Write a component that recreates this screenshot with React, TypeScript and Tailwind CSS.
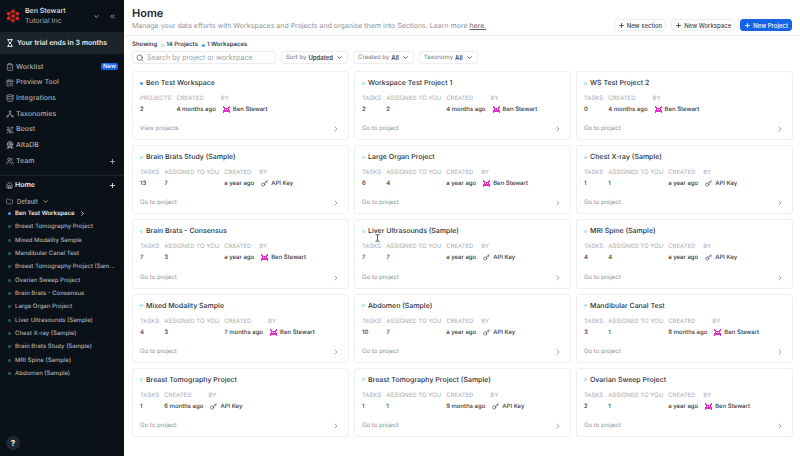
import type { ReactNode } from "react";
import {
  ChevronDown,
  ChevronRight,
  ChevronsLeft,
  ClipboardCheck,
  Database,
  Folder,
  Hourglass,
  House,
  Key,
  Network,
  Plus,
  Search,
  Users,
} from "lucide-react";

type Creator = "Ben Stewart" | "API Key";

type Item = {
  name: string;
  workspace?: boolean;
  count: string;
  assigned?: string;
  created: string;
  by: Creator;
};

const items: Item[] = [
  { name: "Ben Test Workspace", workspace: true, count: "2", created: "4 months ago", by: "Ben Stewart" },
  { name: "Workspace Test Project 1", count: "2", assigned: "2", created: "4 months ago", by: "Ben Stewart" },
  { name: "WS Test Project 2", count: "0", created: "4 months ago", by: "Ben Stewart" },
  { name: "Brain Brats Study (Sample)", count: "13", assigned: "7", created: "a year ago", by: "API Key" },
  { name: "Large Organ Project", count: "6", assigned: "4", created: "a year ago", by: "Ben Stewart" },
  { name: "Chest X-ray (Sample)", count: "1", assigned: "1", created: "a year ago", by: "API Key" },
  { name: "Brain Brats - Consensus", count: "7", assigned: "3", created: "a year ago", by: "Ben Stewart" },
  { name: "Liver Ultrasounds (Sample)", count: "7", assigned: "7", created: "a year ago", by: "API Key" },
  { name: "MRI Spine (Sample)", count: "4", assigned: "4", created: "a year ago", by: "API Key" },
  { name: "Mixed Modality Sample", count: "4", assigned: "3", created: "7 months ago", by: "Ben Stewart" },
  { name: "Abdomen (Sample)", count: "10", assigned: "7", created: "a year ago", by: "API Key" },
  { name: "Mandibular Canal Test", count: "3", assigned: "1", created: "8 months ago", by: "Ben Stewart" },
  { name: "Breast Tomography Project", count: "1", created: "6 months ago", by: "API Key" },
  { name: "Breast Tomography Project (Sample)", count: "1", assigned: "1", created: "9 months ago", by: "API Key" },
  { name: "Ovarian Sweep Project", count: "2", assigned: "1", created: "a year ago", by: "Ben Stewart" },
];

const tree = [
  "Breast Tomography Project",
  "Mixed Modality Sample",
  "Mandibular Canal Test",
  "Breast Tomography Project (Sam...",
  "Ovarian Sweep Project",
  "Brain Brats - Consensus",
  "Large Organ Project",
  "Liver Ultrasounds (Sample)",
  "Chest X-ray (Sample)",
  "Brain Brats Study (Sample)",
  "MRI Spine (Sample)",
  "Abdomen (Sample)",
];

function Logo() {
  const dots = [
    [7, 2.2], [2.6, 4.6], [11.4, 4.6], [7, 7], [2.6, 9.4], [11.4, 9.4], [7, 11.8],
  ];
  return (
    <svg viewBox="0 0 14 14" className="size-3.5 shrink-0" aria-hidden="true">
      <path d="M7 2.2 11.4 4.6v4.8L7 11.8 2.6 9.4V4.6zM7 2.2v9.6M2.6 4.6l8.8 4.8M11.4 4.6 2.6 9.4" stroke="#8f1d1a" strokeWidth="1" fill="none" />
      {dots.map(([x, y]) => (
        <circle key={`${x}-${y}`} cx={x} cy={y} r="1.8" fill="#d0281f" />
      ))}
    </svg>
  );
}

function PreviewIcon() {
  return (
    <svg viewBox="0 0 24 24" className="size-2" fill="none" stroke="currentColor" strokeWidth="2" aria-hidden="true">
      <path d="M21 11V5a2 2 0 0 0-2-2H5a2 2 0 0 0-2 2v14a2 2 0 0 0 2 2h6M3 8l18 0M8 3l-3 5M15 3l-3 5M7 13l4 4" />
      <circle cx="16" cy="16" r="3.5" />
      <path d="m19 19 3 3" />
    </svg>
  );
}

function TaxonomyIcon() {
  return (
    <svg viewBox="0 0 24 24" className="size-2" fill="none" stroke="currentColor" strokeWidth="2.5" aria-hidden="true">
      <circle cx="12" cy="5" r="2.5" />
      <circle cx="4.5" cy="19" r="2.5" />
      <circle cx="19.5" cy="19" r="2.5" />
      <path d="M12 7.5V12L6 17M12 12l6 5" />
    </svg>
  );
}

function BoostIcon() {
  return (
    <svg viewBox="0 0 24 24" className="size-2" fill="none" stroke="currentColor" strokeWidth="2" strokeLinecap="round" aria-hidden="true">
      <path d="M9 13c1-5 5-9 12-10-1 7-5 11-10 12zM9 9H5l-2 4h5M15 15v4l-4 2v-5M3 21l4-4M3 4l3 2M20 17l2 3M8 3l1 2M18 21l-1-2" />
    </svg>
  );
}

function AltaIcon() {
  return (
    <svg viewBox="0 0 24 24" className="size-2" fill="none" stroke="currentColor" strokeWidth="3" strokeLinecap="round" aria-hidden="true">
      <circle cx="12" cy="10" r="8" />
      <circle cx="12" cy="10" r="3" />
      <path d="M3 21h6l-1-4M21 21h-6l1-4" />
    </svg>
  );
}

function Avatar() {
  return (
    <svg viewBox="0 0 7 7" className="size-[7px]" fill="#e62bc8" aria-hidden="true">
      <path d="M0 0h1v1h1v1h3V1h1V0h1v2H6v2h1v3H6V6H1v1H0V4h1V2H0z" />
      <path d="M2 3h1v1H2zM4 3h1v1H4z" fill="#fff" />
    </svg>
  );
}

function KeyIcon() {
  return <Key className="size-[7px]" strokeWidth={2} />;
}

function Bullet({ workspace, dark }: { workspace?: boolean; dark?: boolean }) {
  if (workspace) return <span className="size-[3px] shrink-0 rounded-full bg-[#3b9df5]" />;
  return (
    <span className={`size-[3px] shrink-0 rounded-full border ${dark ? "border-[#2c8f9e]" : "border-[#7fd8ea]"}`} />
  );
}

function NavItem({ icon, label, children }: { icon: ReactNode; label: string; children?: ReactNode }) {
  return (
    <li className="flex items-center justify-between pr-1.5">
      <a href="#" className="flex items-center gap-0.5">
        {icon}
        {label}
      </a>
      {children}
    </li>
  );
}

function Sidebar() {
  return (
    <aside className="flex w-[124px] shrink-0 flex-col bg-[#0b1118] text-[#a9adb2]">
      <div className="flex h-8 items-center gap-[5px] pr-2 pl-1.5">
        <Logo />
        <div className="min-w-0 flex-1 leading-[10px]">
          <p className="text-[7px] font-medium text-[#e4e6e8]">Ben Stewart</p>
          <p className="text-[7px]">Tutorial Inc</p>
        </div>
        <button type="button" aria-label="Switch organisation" className="pr-1">
          <ChevronDown className="size-[7px]" strokeWidth={3} />
        </button>
        <button type="button" aria-label="Collapse sidebar">
          <ChevronsLeft className="size-[7px]" strokeWidth={3} />
        </button>
      </div>
      <div className="flex h-[22px] items-center gap-[3px] bg-[#1b242b] pl-1.5 text-[7px] font-semibold text-[#e9ebec]">
        <Hourglass className="size-2" strokeWidth={3} />
        Your trial ends in 3 months
      </div>
      <ul className="mt-[5px] grid h-[110px] auto-rows-fr pl-1.5 text-[7px] font-medium">
        <NavItem icon={<ClipboardCheck className="size-2" />} label="Worklist">
          <span className="rounded-[2px] bg-[#1763e5] px-0.5 text-[6px] leading-[7px] text-white">New</span>
        </NavItem>
        <NavItem icon={<PreviewIcon />} label="Preview Tool" />
        <NavItem icon={<Database className="size-2" />} label="Integrations" />
        <NavItem icon={<TaxonomyIcon />} label="Taxonomies" />
        <NavItem icon={<BoostIcon />} label="Boost" />
        <NavItem icon={<AltaIcon />} label="AltaDB" />
        <NavItem icon={<Users className="size-2" />} label="Team">
          <button type="button" aria-label="Invite to team" className="px-0.5">
            <Plus className="size-[7px]" strokeWidth={3} />
          </button>
        </NavItem>
      </ul>
      <div className="mt-1.5 flex h-5 items-center justify-between border-t border-[#1d232a] pr-2 pl-1.5 text-[7px] font-semibold text-[#e9ebec]">
        <a href="#" className="flex items-center gap-0.5">
          <House className="size-[7px]" />
          Home
        </a>
        <button type="button" aria-label="Add to home">
          <Plus className="size-[7px]" strokeWidth={3} />
        </button>
      </div>
      <button type="button" className="flex h-3 items-center gap-1 pl-1.5 text-[6px] font-medium">
        <Folder className="size-[7px]" />
        Default
        <ChevronDown className="size-[7px]" strokeWidth={3} />
      </button>
      <ul className="grid h-[173px] auto-rows-fr pl-2 text-[6px] font-medium">
        <li className="flex items-center gap-1 text-[#e9ebec]">
          <Bullet workspace />
          <a href="#" className="font-semibold">Ben Test Workspace</a>
          <ChevronRight className="size-[7px]" strokeWidth={3} />
        </li>
        {tree.map((name) => (
          <li key={name} className="flex items-center gap-1">
            <Bullet dark />
            <a href="#" className="whitespace-nowrap">{name}</a>
          </li>
        ))}
      </ul>
      <button
        type="button"
        aria-label="Help"
        className="mt-auto mb-1.5 ml-1.5 size-3.5 rounded-full bg-[#20292f] text-[8px] leading-none font-bold text-white"
      >
        ?
      </button>
    </aside>
  );
}

function HeaderButton({ label, primary }: { label: string; primary?: boolean }) {
  return (
    <button
      type="button"
      className={`flex h-3 items-center gap-0.5 rounded-[3px] border px-[3px] text-[6px] font-medium ${
        primary ? "border-[#1763e5] bg-[#1763e5] text-white" : "border-[#ededef] text-[#3f464e]"
      }`}
    >
      <Plus className="size-[7px]" strokeWidth={3} />
      {label}
    </button>
  );
}

function Filter({ id, label, value }: { id: string; label: string; value: string }) {
  return (
    <div className="flex h-[13px] items-center rounded-[3px] border border-[#ededef] px-1 text-[6px]">
      <label htmlFor={id} className="mr-0.5 text-[#747a82]">{label}</label>
      <select id={id} className="field-sizing-content appearance-none font-semibold text-[#3f464e]">
        <option>{value}</option>
      </select>
      <ChevronDown className="ml-[3px] size-[7px] text-[#3f464e]" strokeWidth={3} />
    </div>
  );
}

function Stat({ label, children }: { label: string; children: ReactNode }) {
  return (
    <div>
      <dt className="text-[6px] leading-[11px] text-[#a7abb1]">{label}</dt>
      <dd className="flex h-[11px] items-center text-[6px] font-medium text-[#343a42]">{children}</dd>
    </div>
  );
}

function Card({ item }: { item: Item }) {
  return (
    <article className="flex min-w-0 flex-col rounded-[3px] border border-[#efeff1] pr-2 pl-[7px]">
      <h2 className="mt-1.5 flex items-center gap-[3px] text-[7px] leading-[10px] font-medium text-[#2b3138]">
        <Bullet workspace={item.workspace} />
        {item.name}
      </h2>
      <dl className="mt-[5px] flex gap-[5px] whitespace-nowrap">
        <Stat label={item.workspace ? "PROJECTS" : "TASKS"}>{item.count}</Stat>
        {item.assigned && <Stat label="ASSIGNED TO YOU">{item.assigned}</Stat>}
        <Stat label="CREATED">{item.created}</Stat>
        <Stat label="BY">
          <span className="flex w-3 items-center pl-0.5">
            {item.by === "API Key" ? <KeyIcon /> : <Avatar />}
          </span>
          {item.by}
        </Stat>
      </dl>
      <a href="#" className="mt-auto mb-[5px] flex items-center justify-between text-[6px] leading-[10px] text-[#8f949b]">
        {item.workspace ? "View projects" : "Go to project"}
        <ChevronRight className="size-2 text-[#747a82]" />
      </a>
    </article>
  );
}

export default function App() {
  return (
    <div className="relative flex min-h-screen bg-white font-['Inter',sans-serif] [text-rendering:geometricPrecision]">
      <Sidebar />
      <main className="flex min-w-0 flex-1 flex-col">
        <header className="flex h-9 items-end justify-between border-b border-[#ededef] pr-2 pb-1 pl-2">
          <div>
            <h1 className="text-[11px] leading-[14px] font-semibold text-[#22272e]">Home</h1>
            <p className="text-[7px] leading-[11px] text-[#8d9299]">
              Manage your data efforts with Workspaces and Projects and organise them into Sections. Learn more{" "}
              <a href="#" className="text-[#5d646c] underline">here.</a>
            </p>
          </div>
          <div className="flex gap-[5px]">
            <HeaderButton label="New section" />
            <HeaderButton label="New Workspace" />
            <HeaderButton label="New Project" primary />
          </div>
        </header>
        <p className="mt-1 flex items-center pl-2 text-[6px] leading-[10px] font-semibold text-[#2f4052]">
          Showing
          <span className="ml-1 flex items-center gap-0.5"><Bullet />14 Projects</span>
          <span className="ml-1 flex items-center gap-0.5"><Bullet workspace />1 Workspaces</span>
        </p>
        <div className="mt-px flex gap-[5px] pl-2">
          <label className="flex h-[13px] w-36 items-center gap-[3px] rounded-[3px] border border-[#ededef] pl-[3px]">
            <Search className="size-2 shrink-0 text-[#3f464e]" />
            <input
              type="search"
              aria-label="Search by project or workspace"
              placeholder="Search by project or workspace"
              className="h-[11px] min-w-0 flex-1 text-[7px] leading-[11px] outline-none placeholder:text-[#9a9fa6]"
            />
          </label>
          <Filter id="sort" label="Sort by" value="Updated" />
          <Filter id="created-by" label="Created by" value="All" />
          <Filter id="taxonomy" label="Taxonomy" value="All" />
        </div>
        <section aria-label="Projects" className="mt-[7px] mb-[19px] grid flex-1 auto-rows-fr grid-cols-3 gap-[5px] pr-[7px] pl-2">
          {items.map((item) => (
            <Card key={item.name} item={item} />
          ))}
        </section>
      </main>
      <svg viewBox="0 0 5 8" className="pointer-events-none absolute top-[234px] left-[375px] h-2 w-[5px]" fill="none" stroke="#22272e" strokeWidth="0.8" aria-hidden="true">
        <path d="M0.5 0.5q2 0 2 1.2 0-1.2 2-1.2M2.5 1.5v5M0.5 7.5q2 0 2-1.2 0 1.2 2 1.2" />
      </svg>
    </div>
  );
}
